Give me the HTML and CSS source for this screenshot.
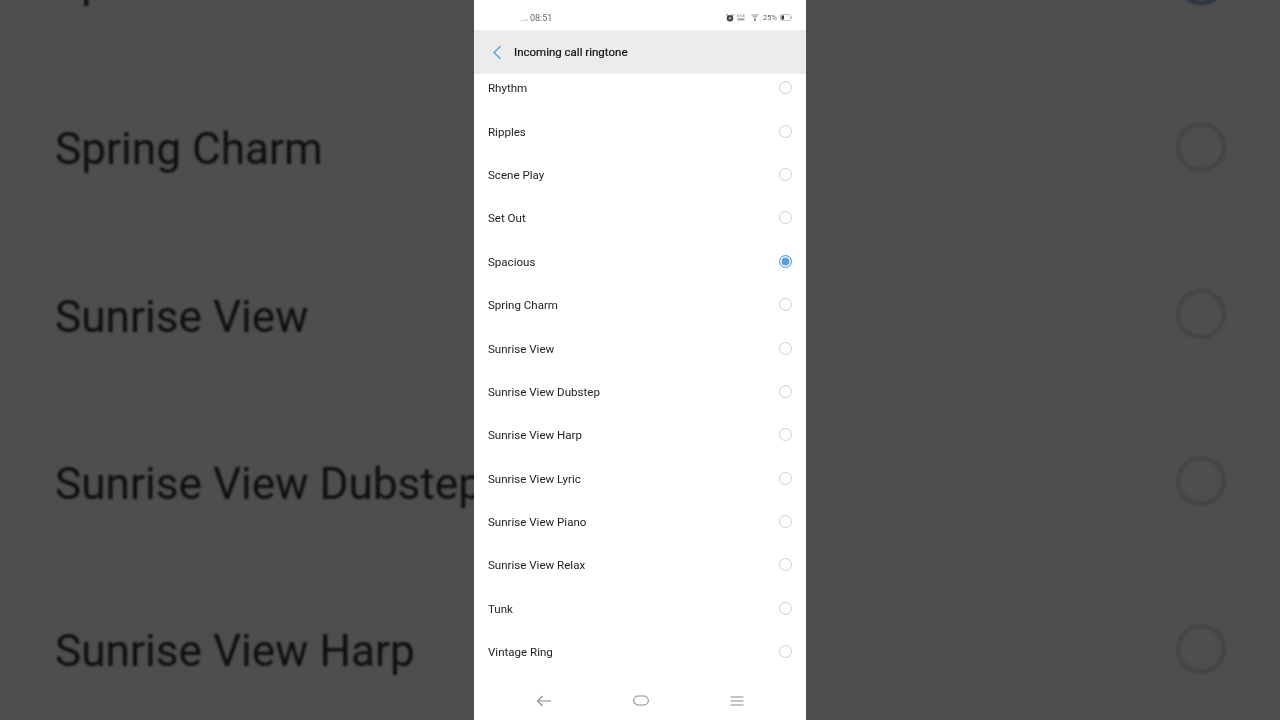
FILE: index.html
```html
<!DOCTYPE html>
<html lang="en">
<head>
<meta charset="utf-8">
<title>Incoming call ringtone</title>
<link rel="stylesheet" href="styles.css">
</head>
<body>
<div class="stage">
  <div class="side side-left" aria-hidden="true">
    <div class="side-rows">
      <div class="side-row">Spacious</div>
      <div class="side-row">Spring Charm</div>
      <div class="side-row">Sunrise View</div>
      <div class="side-row">Sunrise View Dubstep</div>
      <div class="side-row">Sunrise View Harp</div>
    </div>
  </div>
  <main class="phone">
    <div class="status">
      <div class="status-left">
        <svg class="signal" width="8" height="4" viewBox="0 0 8 4"><path d="M0.5 3h1v1h-1zM2.5 3h1v1h-1zM4.5 2.6h1V4h-1zM6.5 2h1v2h-1z" fill="#bbb"/></svg>
        <span class="clock">08:51</span>
      </div>
      <div class="status-right">
        <svg width="8" height="8" viewBox="0 0 8 8"><circle cx="4" cy="4.2" r="3.3" fill="#444"/><circle cx="4" cy="4.2" r="1.3" fill="#aaa"/><path d="M0.4 1.4L1.8 0.3M7.6 1.4L6.2 0.3" stroke="#444"/></svg>
        <svg class="net" width="8" height="7" viewBox="0 0 8 7"><path d="M0.5 0.5h1.6v2.4H0.5zM3.4 0.5h1.2v2.4H3.4zM5.9 0.5h1.6v2.4H5.9zM0.5 4.2h7v2.3h-7z" fill="#a5a5a5"/></svg>
        <svg class="wifi" width="10" height="7" viewBox="0 0 10 7"><path d="M0.5 1h7M1.7 2.8h4.6M3 4.4h2" stroke="#999" fill="none"/><circle cx="4" cy="6" r="0.9" fill="#666"/><circle cx="9" cy="6" r="0.6" fill="#999"/></svg>
        <span class="pct">25%</span>
        <svg width="12" height="7" viewBox="0 0 12 7"><rect x="0.5" y="0.5" width="10" height="6" rx="1" fill="#fff" stroke="#aaa" stroke-width="0.7"/><rect x="1.5" y="1.5" width="2.4" height="4" fill="#333"/><rect x="11" y="2.4" width="0.8" height="2.2" fill="#aaa"/></svg>
      </div>
    </div>
    <header class="header">
      <svg class="back" width="10" height="15" viewBox="0 0 10 15"><path d="M8.4 1.2L2 7.5l6.4 6.3" fill="none" stroke="#4f9fdc" stroke-width="1.3"/></svg>
      <h1 class="title">Incoming call ringtone</h1>
    </header>
    <div class="list">
      <div class="rows">
        <div class="row"><span>Rhythm</span><i class="radio"></i></div>
        <div class="row"><span>Ripples</span><i class="radio"></i></div>
        <div class="row"><span>Scene Play</span><i class="radio"></i></div>
        <div class="row"><span>Set Out</span><i class="radio"></i></div>
        <div class="row"><span>Spacious</span><i class="radio radio-on"></i></div>
        <div class="row"><span>Spring Charm</span><i class="radio"></i></div>
        <div class="row"><span>Sunrise View</span><i class="radio"></i></div>
        <div class="row"><span>Sunrise View Dubstep</span><i class="radio"></i></div>
        <div class="row"><span>Sunrise View Harp</span><i class="radio"></i></div>
        <div class="row"><span>Sunrise View Lyric</span><i class="radio"></i></div>
        <div class="row"><span>Sunrise View Piano</span><i class="radio"></i></div>
        <div class="row"><span>Sunrise View Relax</span><i class="radio"></i></div>
        <div class="row"><span>Tunk</span><i class="radio"></i></div>
        <div class="row"><span>Vintage Ring</span><i class="radio"></i></div>
      </div>
    </div>
    <nav class="nav">
      <svg width="16" height="12" viewBox="0 0 16 12"><path d="M6.5 1L1.5 6l5 5M1.5 6H15" fill="none" stroke="#8a8a8a" stroke-width="1.1"/></svg>
      <svg width="16" height="11" viewBox="0 0 16 11"><rect x="0.7" y="1" width="14.6" height="9" rx="4.5" fill="none" stroke="#8a8a8a" stroke-width="1.1"/></svg>
      <svg width="14" height="10" viewBox="0 0 14 10"><path d="M0.5 1h13M0.5 5h13M0.5 9h13" fill="none" stroke="#8a8a8a" stroke-width="1.1"/></svg>
    </nav>
  </main>
  <div class="side side-right" aria-hidden="true">
    <div class="side-radios">
      <i class="big big-on"></i>
      <i class="big"></i>
      <i class="big"></i>
      <i class="big"></i>
      <i class="big"></i>
    </div>
  </div>
</div>
</body>
</html>
```
FILE: styles.css
```css
* { box-sizing: border-box; }
html, body { margin: 0; height: 100%; }
body { background: #4e4e4e; font-family: Roboto, "Liberation Sans", sans-serif; overflow: hidden; }

.stage { display: flex; width: 1280px; height: 720px; }

.side { flex: 0 0 474px; height: 720px; overflow: hidden; background: #4e4e4e; }
.side-rows { margin-top: -101.6px; padding-left: 55px; filter: blur(0.9px); }
.side-row {
  height: 167.3px;
  display: flex;
  align-items: center;
  white-space: nowrap;
  font-size: 44.2px;
  color: #0f0f0f;
}

.side-radios {
  display: flex;
  flex-direction: column;
  align-items: flex-start;
  gap: 117.3px;
  margin-top: -45.5px;
  padding-left: 370px;
  filter: blur(1px);
}
.big { flex: none; width: 50px; height: 50px; border: 4px solid #444; border-radius: 50%; }
.big-on { border-color: #2b333d; }

.phone {
  flex: 0 0 332px;
  height: 720px;
  background: #fff;
  display: flex;
  flex-direction: column;
  filter: blur(0.35px);
}

.status {
  flex: 0 0 30px;
  display: flex;
  align-items: center;
  justify-content: space-between;
  padding: 5px 14px 0 46px;
  background: #fff;
  color: #666;
  font-size: 9px;
}
.status-left { display: flex; align-items: center; gap: 2px; }
.signal { margin-top: 2px; }
.clock { font-size: 9px; }
.status-right { display: flex; align-items: center; gap: 3px; }
.wifi { margin-left: 3px; }
.pct { font-size: 7.5px; margin-left: -1px; }

.header {
  flex: 0 0 44px;
  display: flex;
  align-items: center;
  padding-left: 18px;
  gap: 12px;
  background: #ececec;
}
.title { margin: 0; font-size: 11.5px; font-weight: 400; color: #111; -webkit-text-stroke: 0.2px #111; }

.list { flex: 0 0 604px; overflow: hidden; }
.rows { margin-top: -7.5px; }
.row {
  height: 43.4px;
  display: flex;
  align-items: center;
  justify-content: space-between;
  padding: 0 14px;
  font-size: 11.55px;
  color: #222;
}
.radio { flex: none; width: 13px; height: 13px; border: 1px solid #cfcfcf; border-radius: 50%; margin-top: -1px; }
.radio-on { border: 1.3px solid #5a9fe2; background: #5a9fe2; box-shadow: inset 0 0 0 1.6px #fff; }

.nav {
  flex: 1;
  display: flex;
  align-items: center;
  justify-content: center;
  gap: 81px;
  padding: 3px 1px 0 0;
  background: #fff;
}
```
